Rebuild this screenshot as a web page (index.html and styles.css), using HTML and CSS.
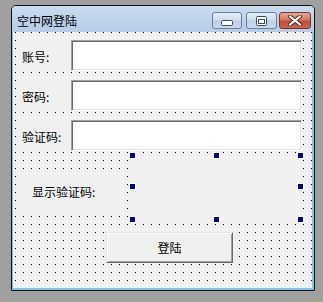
FILE: index.html
```html
<!DOCTYPE html>
<html>
<head>
  <title>空中网登陆</title>
  <link rel="stylesheet" href="styles.css">
</head>
<body>
  <div class="window">
    <div class="titlebar">
      <span class="title">空中网登陆</span>
      <div class="caption">
        <span class="cap cap-min">
          <svg width="12" height="6" viewBox="0 0 12 6"><rect x="0.5" y="0.5" width="11" height="5" rx="1" fill="#fff" stroke="#3c4b61"/></svg>
        </span>
        <span class="cap cap-max">
          <svg width="11" height="10" viewBox="0 0 11 10"><rect x="0.5" y="0.5" width="10" height="9" rx="1" fill="#fff" stroke="#3c4b61"/><rect x="2.5" y="3.5" width="6" height="4" fill="none" stroke="#3c4b61"/></svg>
        </span>
        <span class="cap cap-close">
          <svg width="14" height="11" viewBox="0 0 14 11"><path d="M2 1.5 L12 9.5 M12 1.5 L2 9.5" stroke="#4a2a24" stroke-width="4" stroke-linecap="round"/><path d="M2 1.5 L12 9.5 M12 1.5 L2 9.5" stroke="#fff" stroke-width="2.2" stroke-linecap="round"/></svg>
        </span>
      </div>
    </div>

    <div class="client">
      <div class="fields">
        <div class="row">
          <label class="lbl">账号:</label>
          <input class="txt" type="text">
        </div>
        <div class="row">
          <label class="lbl">密码:</label>
          <input class="txt" type="text">
        </div>
        <div class="row">
          <label class="lbl">验证码:</label>
          <input class="txt" type="text">
        </div>
      </div>

      <div class="code-row">
        <label class="code-lbl">显示验证码:</label>
        <div class="picbox">
          <span class="handle h-tl"></span>
          <span class="handle h-tm"></span>
          <span class="handle h-tr"></span>
          <span class="handle h-ml"></span>
          <span class="handle h-mr"></span>
          <span class="handle h-bl"></span>
          <span class="handle h-bm"></span>
          <span class="handle h-br"></span>
        </div>
      </div>

      <button class="btn">登陆</button>
    </div>
  </div>
</body>
</html>
```

FILE: styles.css
```css
body {
  margin: 0;
  padding: 5px 0 0 11px;
  background: #a0a0a0;
  font-family: "Noto Sans CJK SC", sans-serif;
  font-size: 12px;
  color: #000;
}
.window {
  width: 304px;
  height: 286px;
  box-sizing: border-box;
  border: 1px solid #111;
  border-radius: 5px 5px 0 0;
  background: #7cc6ee;
  overflow: hidden;
}
.titlebar {
  display: flex;
  align-items: flex-start;
  height: 26px;
  background: linear-gradient(#c9dbef, #b6cce7);
}
.title {
  padding: 8px 0 0 5px;
  line-height: 14px;
}
.caption {
  display: flex;
  margin: 6px 3px 0 auto;
}
.cap {
  display: flex;
  align-items: center;
  justify-content: center;
  height: 17px;
  box-sizing: border-box;
  border: 1px solid #6a7f9c;
  border-radius: 3px;
  background: linear-gradient(#e6eef8, #cfdced 48%, #bccfe7 52%, #c9daee);
}
.cap-min {
  width: 30px;
  padding-top: 5px;
}
.cap-max {
  width: 31px;
  margin-left: 4px;
}
.cap-close {
  width: 32px;
  margin-left: 2px;
  border-color: #7a3428;
  background: linear-gradient(#e6a797, #d57762 45%, #c44e37 55%, #cc634c);
}
.client {
  height: 256px;
  margin: 0 2px 0 1px;
  padding-top: 8px;
  box-sizing: border-box;
  background-color: #f0f0f0;
  background-image: conic-gradient(from 270deg at 1px 1px, #000 90deg, transparent 0);
  background-size: 8px 8px;
  background-position: 2px 0;
}
.fields {
  display: flex;
  flex-direction: column;
  gap: 9px;
}
.row {
  display: flex;
  height: 31px;
}
.lbl {
  width: 54px;
  margin-left: 4px;
  padding: 2px 0 0 5px;
  box-sizing: border-box;
  line-height: 29px;
  background: #f0f0f0;
}
.txt {
  width: 231px;
  height: 31px;
  margin: 0;
  padding: 0;
  box-sizing: border-box;
  border: 1px solid;
  border-color: #a0a0a0 #fff #fff #a0a0a0;
  box-shadow: inset 1px 1px #696969, inset -1px -1px #e3e3e3;
  background: #fff;
}
.code-row {
  display: flex;
  align-items: flex-start;
  margin-top: 5px;
}
.code-lbl {
  width: 106px;
  height: 40px;
  margin: 16px 0 0 6px;
  padding-left: 13px;
  box-sizing: border-box;
  line-height: 40px;
  background: #f0f0f0;
}
.picbox {
  position: relative;
  width: 167px;
  height: 63px;
  margin-left: 8px;
  background: #f0f0f0;
}
.handle {
  position: absolute;
  width: 5px;
  height: 5px;
  border: 1px solid #fff;
  background: #000080;
}
.h-tl, .h-tm, .h-tr { top: -4px; }
.h-bl, .h-bm, .h-br { bottom: -4px; }
.h-ml, .h-mr { top: 27px; }
.h-tl, .h-ml, .h-bl { left: -4px; }
.h-tr, .h-mr, .h-br { right: -4px; }
.h-tm, .h-bm { left: 80px; }
.btn {
  display: block;
  width: 127px;
  height: 31px;
  margin: 13px 0 0 93px;
  padding: 0;
  border: 1px solid;
  border-color: #e3e3e3 #696969 #696969 #e3e3e3;
  box-shadow: inset 1px 1px #fff, inset -1px -1px #a0a0a0;
  background: #f0f0f0;
  font-family: "Noto Sans CJK SC", sans-serif;
  font-size: 12px;
  color: #000;
}
```
